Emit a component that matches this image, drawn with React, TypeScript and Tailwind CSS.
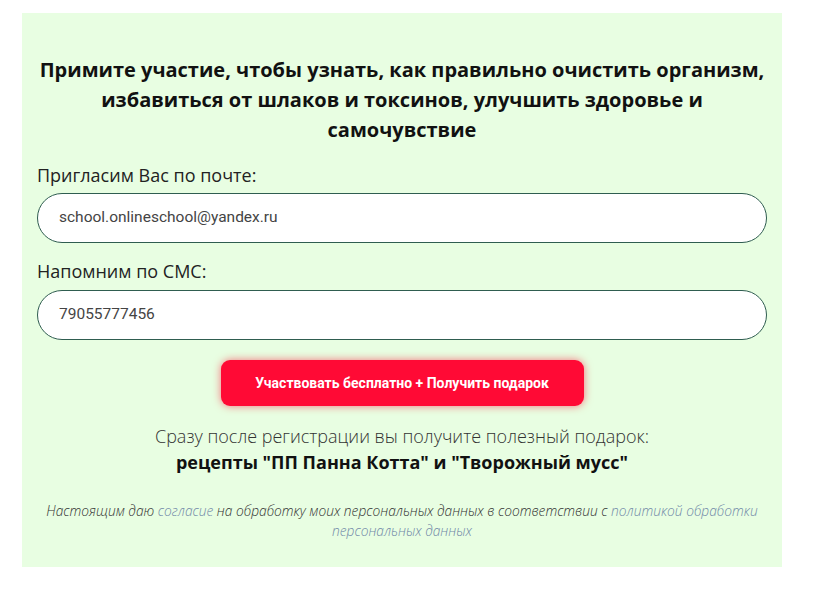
import React from "react";

export default function App() {
  return (
    <div className="w-[831px] h-[600px] bg-white pt-[13px] pl-[22px] font-['Open_Sans',sans-serif]">
      <div className="w-[760px] h-[554px] bg-[#e8fee2] px-[15px] pt-[42px] flex flex-col">
        <h1 className="text-center text-[20px] leading-[30px] font-bold text-[#111]">
          Примите участие, чтобы узнать, как правильно очистить организм, избавиться от шлаков и токсинов, улучшить здоровье и самочувствие
        </h1>
        <label className="mt-[17px] text-[18px] leading-[26px] text-[#222]">
          Пригласим Вас по почте:
        </label>
        <div className="mt-[5px] h-[50px] rounded-full border border-[#2f5d50] bg-white flex items-center pl-[21px]">
          <span className="text-[15.5px] text-[#444] font-['Roboto',sans-serif]">
            school.onlineschool@yandex.ru
          </span>
        </div>
        <label className="mt-[15px] text-[18px] leading-[26px] text-[#222]">
          Напомним по СМС:
        </label>
        <div className="mt-[6px] h-[50px] rounded-full border border-[#2f5d50] bg-white flex items-center pl-[21px]">
          <span className="text-[15.5px] text-[#444] font-['Roboto',sans-serif]">
            79055777456
          </span>
        </div>
        <div className="mt-[20px] flex justify-center">
          <button className="w-[363px] h-[46px] rounded-[9px] bg-[#ff0a35] text-white text-[14px] font-bold font-['Roboto',sans-serif] shadow-[0_0_8px_rgba(255,0,40,0.55)]">
            Участвовать бесплатно + Получить подарок
          </button>
        </div>
        <p className="mt-[17px] text-center text-[18px] leading-[26px] font-light text-[#333]">
          Сразу после регистрации вы получите полезный подарок:
        </p>
        <p className="text-center text-[18px] leading-[26px] font-bold text-[#111]">
          рецепты "ПП Панна Котта" и "Творожный мусс"
        </p>
        <p className="mt-[26px] text-center text-[13.75px] leading-[20px] italic font-light text-[#333]">
          Настоящим даю <span className="text-[#7189a8]">согласие</span> на обработку моих персональных данных в соответствии с{" "}
          <span className="text-[#7189a8]">политикой обработки персональных данных</span>
        </p>
      </div>
    </div>
  );
}
